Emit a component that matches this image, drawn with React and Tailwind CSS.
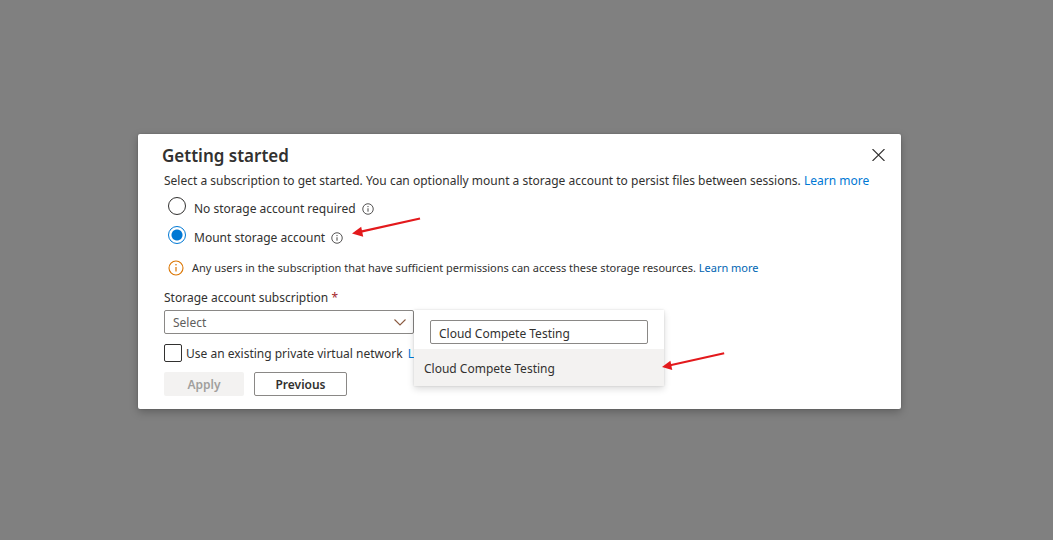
import { useState } from "react";

function InfoIcon({ className }) {
  return (
    <svg viewBox="0 0 16 16" fill="none" className={className} aria-hidden="true">
      <circle cx="8" cy="8" r="7" stroke="currentColor" strokeWidth="1.1" />
      <path d="M8 7v4.600" stroke="currentColor" strokeWidth="1.200" />
      <circle cx="8" cy="4.800" r="0.8" fill="currentColor" />
    </svg>
  );
}

function Arrow({ className }) {
  return (
    <svg viewBox="0 0 70 22" fill="none" className={className} aria-hidden="true">
      <path d="M9 15.600 68 2.500" stroke="#e3191c" strokeWidth="2.200" />
      <path d="M0 17.500 9.200 10.800 11.200 20.800z" fill="#e3191c" />
    </svg>
  );
}

function StorageOption({ id, label, checked, onChange, children }) {
  return (
    <div className="relative flex h-[29px] w-fit items-center">
      <input
        id={id}
        type="radio"
        name="storage"
        checked={checked}
        onChange={onChange}
        className="mb-[6px] ml-1 size-[18px] shrink-0 appearance-none rounded-full border border-[#323130] bg-white checked:border-[#0078d4] checked:bg-[radial-gradient(circle,#0078d4_5px,transparent_6px)]"
      />
      <label htmlFor={id} className="ml-2">
        {label}
      </label>
      <InfoIcon className="ml-[6px] size-3 text-[#323130]" />
      {children}
    </div>
  );
}

export default function App() {
  const [storage, setStorage] = useState("mount");
  const [filter, setFilter] = useState("Cloud Compete Testing");

  return (
    <main className="flex min-h-screen items-center justify-center bg-[#808080] pt-[3px] pr-[14px] font-['Noto_Sans','Open_Sans',sans-serif] text-[12px] leading-5 text-[#323130]">
      <section
        role="dialog"
        aria-labelledby="dialog-title"
        className="w-full max-w-[763px] rounded-[2px] bg-white pt-[10px] pr-4 pb-[13px] pl-6 shadow-[0_3px_8px_rgba(0,0,0,0.25),0_0_2px_rgba(0,0,0,0.2)]"
      >
        <header className="flex h-6 items-center justify-between">
          <h1 id="dialog-title" className="text-[17px] font-semibold">
            Getting started
          </h1>
          <button type="button" aria-label="Close" className="pb-[2px]">
            <svg viewBox="0 0 13 12" className="h-3 w-[13px]" fill="none" aria-hidden="true">
              <path d="M0.500 0 12.500 12M12.500 0 0.500 12" stroke="#323130" strokeWidth="1.100" />
            </svg>
          </button>
        </header>

        <div className="pl-[2px]">
          <p className="mt-[3px]">
            Select a subscription to get started. You can optionally mount a storage account to persist files between
            sessions.{" "}
            <a href="#storage" className="text-[#0078d4]">
              Learn more
            </a>
          </p>

          <div className="mt-[3px]">
            <StorageOption
              id="no-storage"
              label="No storage account required"
              checked={storage === "none"}
              onChange={() => setStorage("none")}
            />
            <StorageOption
              id="mount-storage"
              label="Mount storage account"
              checked={storage === "mount"}
              onChange={() => setStorage("mount")}
            >
              <Arrow className="absolute -top-[7px] left-full ml-[9px] h-[22px] w-[70px]" />
            </StorageOption>
          </div>

          <p className="mt-[6px] flex h-5 items-center pl-1 text-[11px]">
            <InfoIcon className="mr-2 size-4 text-[#db7500]" />
            <span>
              Any users in the subscription that have sufficient permissions can access these storage resources.{" "}
              <a href="#permissions" className="text-[#0065b3]">
                Learn more
              </a>
            </span>
          </p>

          <label htmlFor="subscription" className="mt-[10px] block">
            Storage account subscription <span className="text-[#a4262c]">*</span>
          </label>
          <div className="relative mt-[2px] w-[250px]">
            <select
              id="subscription"
              className="block h-6 w-full appearance-none rounded-[2px] border border-[#8a8886] bg-white px-2 pt-[2px] text-[#605e5c]"
            >
              <option>Select</option>
            </select>
            <svg
              viewBox="0 0 12 7"
              fill="none"
              className="pointer-events-none absolute top-[9px] right-2 h-[7px] w-3"
              aria-hidden="true"
            >
              <path d="M0.500 0.500 6 6l5.500-5.500" stroke="#8a5a40" strokeWidth="1.100" />
            </svg>

            <div className="absolute top-0 left-full z-10 w-[250px] bg-white pt-[10px] shadow-[0_3px_7px_rgba(0,0,0,0.14),0_0_2px_rgba(0,0,0,0.12)]">
              <div className="px-4 pb-[5px]">
                <input
                  type="text"
                  aria-label="Filter subscriptions"
                  value={filter}
                  onChange={(event) => setFilter(event.target.value)}
                  className="block h-6 w-full rounded-[2px] border border-[#8a8886] bg-white px-2 pt-[2px] outline-none"
                />
              </div>
              <button type="button" className="block h-[37px] w-full bg-[#f3f2f1] px-[10px] pt-[2px] text-left">
                Cloud Compete Testing
              </button>
              <Arrow className="absolute top-10 left-full -ml-[2px] h-[22px] w-[64px]" />
            </div>
          </div>

          <div className="mt-[10px] flex h-[18px] items-center whitespace-nowrap">
            <input
              id="private-network"
              type="checkbox"
              className="size-[18px] shrink-0 appearance-none rounded-[2px] border border-[#323130] bg-white checked:bg-[#0078d4]"
            />
            <label htmlFor="private-network" className="ml-1 pt-[2px]">
              Use an existing private virtual network
            </label>
            <a href="#network" className="ml-[5px] pt-[2px] text-[#0078d4]">
              Learn more
            </a>
          </div>

          <div className="mt-[10px] flex gap-[10px] font-semibold">
            <button type="button" disabled className="h-6 w-20 rounded-[2px] bg-[#f3f2f1] pt-[2px] text-[#a19f9d]">
              Apply
            </button>
            <button type="button" className="h-6 w-[93px] rounded-[2px] border border-[#8a8886] bg-white pt-[2px]">
              Previous
            </button>
          </div>
        </div>
      </section>
    </main>
  );
}
